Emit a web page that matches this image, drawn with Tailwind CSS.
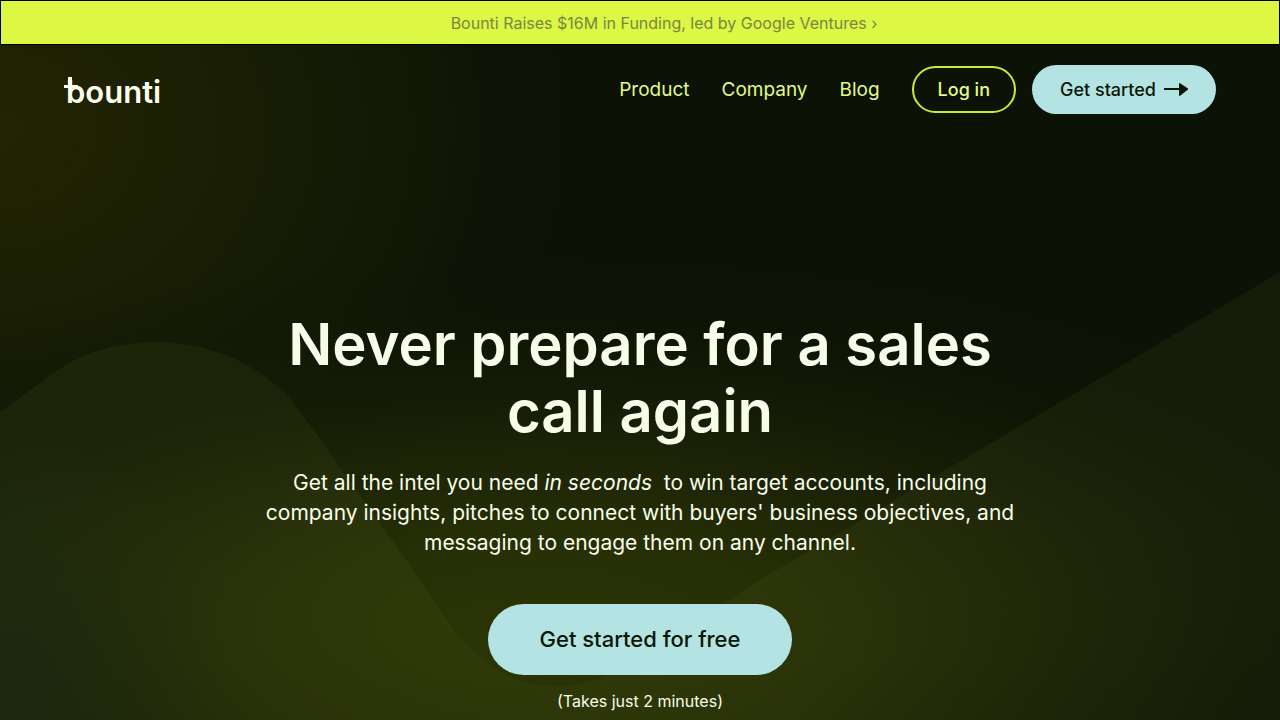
<!DOCTYPE html>
<html lang="en">
<head>
<meta charset="utf-8">
<meta name="viewport" content="width=device-width, initial-scale=1">
<title>Bounti</title>
<script src="https://cdn.jsdelivr.net/npm/@tailwindcss/browser@4"></script>
</head>
<body class="relative isolate flex min-h-screen flex-col overflow-x-hidden bg-[#0c1205] font-['Inter',sans-serif] text-[#f8fdea]">
<!-- Backdrop glow and wave -->
<svg class="absolute inset-0 -z-10 h-full w-full" viewBox="0 0 1280 720" preserveAspectRatio="none" aria-hidden="true">
  <defs>
    <radialGradient id="side" gradientUnits="userSpaceOnUse" cx="0" cy="0" r="1" gradientTransform="translate(0 130) scale(580 480)">
      <stop offset="0" stop-color="#222502"/><stop offset=".4" stop-color="#1a1e04"/><stop offset=".75" stop-color="#111906" stop-opacity=".8"/><stop offset="1" stop-color="#0c1205" stop-opacity="0"/>
    </radialGradient>
    <radialGradient id="glow" gradientUnits="userSpaceOnUse" cx="0" cy="0" r="1" gradientTransform="translate(540 645) scale(960 390)">
      <stop offset="0" stop-color="#2c3606"/><stop offset=".3" stop-color="#262e06"/><stop offset=".6" stop-color="#181f06" stop-opacity=".9"/><stop offset="1" stop-color="#0e1405" stop-opacity="0"/>
    </radialGradient>
    <radialGradient id="left" gradientUnits="userSpaceOnUse" cx="0" cy="0" r="1" gradientTransform="translate(0 670) scale(240 240)">
      <stop offset="0" stop-color="#16220e"/><stop offset="1" stop-color="#1b280d" stop-opacity="0"/>
    </radialGradient>
    <linearGradient id="wave" x1="0" x2="0" y1="270" y2="690" gradientUnits="userSpaceOnUse">
      <stop offset="0" stop-color="#b9d84a" stop-opacity=".05"/><stop offset=".6" stop-color="#b9d84a" stop-opacity=".05"/><stop offset="1" stop-color="#b9d84a" stop-opacity=".03"/>
    </linearGradient>
  </defs>
  <rect width="1280" height="720" fill="#0c1205"/>
  <rect width="1280" height="720" fill="url(#side)"/>
  <rect width="1280" height="720" fill="url(#glow)"/>
  <rect width="1280" height="720" fill="url(#left)"/>
  <path d="M0 412 L58 370 C130 322 248 336 302 414 C350 482 400 550 447 620 C486 678 540 700 600 679 C660 650 710 610 760 580 L1280 272 V720 H0Z" fill="url(#wave)"/>
</svg>

<div class="flex h-[45px] items-center justify-center border border-black bg-[#dcf744] pl-12">
  <a href="#funding" class="text-[16px] leading-6 text-[#7a8642]">Bounti Raises $16M in Funding, led by Google Ventures ›</a>
</div>

<header class="flex items-center justify-between px-16 pt-5">
  <a href="#home" aria-label="bounti">
    <svg class="h-8 w-24 overflow-visible" viewBox="0 0 96 32" aria-hidden="true">
      <text x="2" y="29" font-family="Inter, sans-serif" font-size="31" font-weight="600" fill="#fafff0">bounti</text>
      <path d="M4 3h4v8h6v3H0v-3h4z" fill="#fafff0"/>
    </svg>
  </a>
  <nav class="flex items-center gap-8 text-[19px] leading-6 text-[#e2fa8a]">
    <a href="#product">Product</a>
    <a href="#company">Company</a>
    <a href="#blog">Blog</a>
    <div class="flex items-center gap-4 text-[18px] font-medium">
      <button class="h-[47px] rounded-full border-2 border-[#c8ed2f] px-6">Log in</button>
      <button class="flex h-[49px] items-center gap-2 rounded-full bg-[#b3e4e3] px-7 text-[#0b1705]">Get started
        <svg class="h-4 w-6" viewBox="0 0 24 16" fill="currentColor" aria-hidden="true"><path d="M0 6h15V2Q15 .5 16.500 1.500L24 6.500v1L16.500 13.500Q15 14.500 15 13V8H0z"/></svg>
      </button>
    </div>
  </nav>
</header>

<main class="flex flex-col items-center px-8 pt-[197px] text-center">
  <h1 class="text-[58px] leading-[67px] font-semibold">Never prepare for a sales<br>call again</h1>
  <p class="mt-[23px] text-[21px] leading-[30px]">Get all the intel you need <em>in seconds</em>&nbsp; to win target accounts, including<br>company insights, pitches to connect with buyers' business objectives, and<br>messaging to engage them on any channel.</p>
  <button class="mt-[46px] h-[71px] rounded-full bg-[#b3e4e3] px-[52px] text-[22px] font-medium text-[#0b1705]">Get started for free</button>
  <p class="mt-[14px] text-[16px] leading-6">(Takes just 2 minutes)</p>
</main>
</body>
</html>
